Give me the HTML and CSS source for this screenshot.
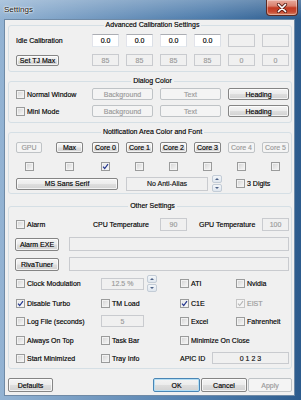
FILE: index.html
```html
<!DOCTYPE html>
<html>
<head>
<meta charset="utf-8">
<title>Settings</title>
<link rel="stylesheet" href="styles.css">
</head>
<body>
<div class="window">
  <div class="titlebar">
    <span class="title">Settings</span>
    <div class="close">
      <svg width="12" height="10" viewBox="0 0 12 10">
        <path d="M2.5 1.5 L9.5 8.5 M9.5 1.5 L2.5 8.5" stroke="#5a2018" stroke-width="3.2" stroke-linecap="round"/>
        <path d="M2.5 1.5 L9.5 8.5 M9.5 1.5 L2.5 8.5" stroke="#fff" stroke-width="1.7" stroke-linecap="round"/>
      </svg>
    </div>
  </div>
  <div class="client">
    <fieldset class="group g1">
      <legend>Advanced Calibration Settings</legend>
      <div class="row r13">
        <span class="lbl">Idle Calibration</span>
        <div class="cal">
          <div class="edit">0.0</div>
          <div class="edit">0.0</div>
          <div class="edit">0.0</div>
          <div class="edit">0.0</div>
          <div class="edit dis"></div>
          <div class="edit dis"></div>
        </div>
      </div>
      <div class="row r12 mt7">
        <button class="btn b-tj">Set TJ Max</button>
        <div class="cal">
          <div class="edit dis">85</div>
          <div class="edit dis">85</div>
          <div class="edit dis">85</div>
          <div class="edit dis">85</div>
          <div class="edit dis">0</div>
          <div class="edit dis">0</div>
        </div>
      </div>
    </fieldset>

    <fieldset class="group g2">
      <legend>Dialog Color</legend>
      <div class="row r12">
        <label class="chk"><span class="box"></span>Normal Window</label>
        <div class="cols3">
          <button class="btn dis">Background</button>
          <button class="btn dis">Text</button>
          <button class="btn">Heading</button>
        </div>
      </div>
      <div class="row r12 mt5">
        <label class="chk"><span class="box"></span>Mini Mode</label>
        <div class="cols3">
          <button class="btn dis">Background</button>
          <button class="btn dis">Text</button>
          <button class="btn">Heading</button>
        </div>
      </div>
    </fieldset>

    <fieldset class="group g3">
      <legend>Notification Area Color and Font</legend>
      <div class="row r11 cores">
        <button class="btn dis c-gpu">GPU</button>
        <button class="btn c-max">Max</button>
        <button class="btn c-0">Core 0</button>
        <button class="btn c-n">Core 1</button>
        <button class="btn c-n">Core 2</button>
        <button class="btn c-n">Core 3</button>
        <button class="btn dis c-n">Core 4</button>
        <button class="btn dis c-n">Core 5</button>
      </div>
      <div class="row r9 mt9 cores">
        <span class="cell c-gpu"><span class="box"></span></span>
        <span class="cell c-max"><span class="box"></span></span>
        <span class="cell c-0"><span class="box on"><svg width="7" height="7" viewBox="0 0 7 7"><path d="M1 3.6 L2.7 5.5 L6 1.2" fill="none" stroke="#26388f" stroke-width="1.2"/></svg></span></span>
        <span class="cell c-n"><span class="box"></span></span>
        <span class="cell c-n"><span class="box"></span></span>
        <span class="cell c-n"><span class="box"></span></span>
        <span class="cell c-n"><span class="box"></span></span>
        <span class="cell c-n"><span class="box"></span></span>
      </div>
      <div class="row r17 mt4">
        <button class="btn b-font">MS Sans Serif</button>
        <div class="edit ro f-alias">No Anti-Alias</div>
        <div class="spin sp-font"><span class="up"></span><span class="dn"></span></div>
        <label class="chk ml14"><span class="box"></span>3 Digits</label>
      </div>
    </fieldset>

    <fieldset class="group g4">
      <legend>Other Settings</legend>
      <div class="row r13">
        <div class="c-alarm"><label class="chk"><span class="box"></span>Alarm</label></div>
        <span class="lbl t-cpu">CPU Temperature</span>
        <div class="edit dis w27">90</div>
        <span class="lbl t-gpu">GPU Temperature</span>
        <div class="edit dis w27">100</div>
      </div>
      <div class="row r14 mt6">
        <button class="btn b-exe">Alarm EXE</button>
        <div class="edit dis path"></div>
      </div>
      <div class="row r14 mt6">
        <button class="btn b-exe">RivaTuner</button>
        <div class="edit dis path"></div>
      </div>
      <div class="row r17 mt4">
        <div class="ca"><label class="chk"><span class="box"></span>Clock Modulation</label></div>
        <div class="cb"><div class="edit dis w43 h12">12.5 %</div><div class="spin sp-clk"><span class="up"></span><span class="dn"></span></div></div>
        <div class="cc"><label class="chk"><span class="box"></span>ATI</label></div>
        <label class="chk"><span class="box"></span>Nvidia</label>
      </div>
      <div class="row r12 mt5">
        <div class="ca"><label class="chk"><span class="box on"><svg width="7" height="7" viewBox="0 0 7 7"><path d="M1 3.6 L2.7 5.5 L6 1.2" fill="none" stroke="#26388f" stroke-width="1.2"/></svg></span>Disable Turbo</label></div>
        <div class="cb"><label class="chk"><span class="box"></span>TM Load</label></div>
        <div class="cc"><label class="chk"><span class="box on"><svg width="7" height="7" viewBox="0 0 7 7"><path d="M1 3.6 L2.7 5.5 L6 1.2" fill="none" stroke="#26388f" stroke-width="1.2"/></svg></span>C1E</label></div>
        <label class="chk dis"><span class="box on"><svg width="7" height="7" viewBox="0 0 7 7"><path d="M1 3.6 L2.7 5.5 L6 1.2" fill="none" stroke="#b5b5b5" stroke-width="1.1"/></svg></span>EIST</label>
      </div>
      <div class="row r12 mt6">
        <div class="ca"><label class="chk"><span class="box"></span>Log File (seconds)</label></div>
        <div class="cb"><div class="edit dis w43 h12">5</div></div>
        <div class="cc"><label class="chk"><span class="box"></span>Excel</label></div>
        <label class="chk"><span class="box"></span>Fahrenheit</label>
      </div>
      <div class="row r12 mt7">
        <div class="ca"><label class="chk"><span class="box"></span>Always On Top</label></div>
        <div class="cb"><label class="chk"><span class="box"></span>Task Bar</label></div>
        <label class="chk"><span class="box"></span>Minimize On Close</label>
      </div>
      <div class="row r12 mt6">
        <div class="ca"><label class="chk"><span class="box"></span>Start Minimized</label></div>
        <div class="cb"><label class="chk"><span class="box"></span>Tray Info</label></div>
        <span class="lbl t-apic">APIC ID</span>
        <div class="edit ro apic">0 1 2 3</div>
      </div>
    </fieldset>

    <div class="row r14 bottom">
      <button class="btn b-def">Defaults</button>
      <button class="btn default b-ok">OK</button>
      <button class="btn b-cancel">Cancel</button>
      <button class="btn dis b-apply">Apply</button>
    </div>
  </div>
</div>
</body>
</html>
```

FILE: styles.css
```css
* { box-sizing: border-box; }
html, body { margin: 0; padding: 0; }
body {
  width: 301px;
  height: 400px;
  overflow: hidden;
  font-family: "Liberation Sans", Arial, sans-serif;
  font-size: 7px;
  color: #000;
  -webkit-text-stroke: 0.15px currentColor;
  background:
    linear-gradient(180deg, rgba(255,255,255,0.25) 0px, rgba(255,255,255,0) 19px),
    linear-gradient(90deg, #93b3d3 0%, #6f96be 35%, #4b7aaa 70%, #2c5b8d 100%);
}
.window { display: flex; flex-direction: column; height: 400px; }

.titlebar {
  height: 19px;
  display: flex;
  justify-content: space-between;
  align-items: flex-start;
  padding: 0 3px 0 4px;
}
.title {
  font-size: 8px;
  line-height: 8px;
  margin-top: 6px;
  color: #111;
  -webkit-text-stroke: 0;
  text-shadow: 0 0 3px #fff, 0 0 2px #fff, 0 0 1px #fff;
}
.close {
  width: 32px;
  height: 16px;
  border: 1px solid #5c2a22;
  border-top: none;
  border-radius: 0 0 4px 4px;
  background: linear-gradient(180deg, #e8ab9d 0%, #d9806d 40%, #c23a21 52%, #c74b33 80%, #d98a6a 100%);
  box-shadow: inset 0 0 0 1px rgba(255,255,255,0.35);
  display: flex;
  align-items: center;
  justify-content: center;
}

.client {
  margin-left: 4px;
  width: 291px;
  height: 377px;
  background: #f0f0f0;
  border: 1px solid #6f8aa6;
  padding: 0 2px 0 3px;
}

.group {
  margin: 0;
  width: 284px;
  min-width: 0;
  padding: 0 2px 0 7px;
  border: 1px solid #d5dfe5;
  border-radius: 3px;
}
.group legend {
  margin: 0 auto;
  padding: 0 2px;
  height: 10px;
  line-height: 10px;
}
.g1 { padding-top: 4px; padding-bottom: 5px; }
.g2 { margin-top: 4px; padding-top: 2px; padding-bottom: 5px; }
.g3 { margin-top: 4px; padding-top: 5px; padding-bottom: 1px; }
.g4 { margin-top: 7px; padding-top: 7px; padding-bottom: 4px; }

.row { display: flex; align-items: center; }
.r9 { height: 9px; }
.r11 { height: 11px; }
.r12 { height: 12px; }
.r13 { height: 13px; }
.r14 { height: 14px; }
.r17 { height: 17px; }
.mt4 { margin-top: 4px; }
.mt5 { margin-top: 5px; }
.mt6 { margin-top: 6px; }
.mt7 { margin-top: 7px; }
.mt9 { margin-top: 9px; }
.ml14 { margin-left: 14px; }

.lbl { white-space: nowrap; }

/* edit boxes */
.edit {
  height: 100%;
  background: #fff;
  border: 1px solid #abadb3;
  border-color: #abadb3 #dbdfe6 #e3e9ef #e2e3ea;
  display: flex;
  align-items: center;
  justify-content: center;
  white-space: nowrap;
}
.edit.dis {
  background: #f0f0f0;
  border: 1px solid #c9cbcf;
  color: #9a9a9a;
}
.edit.ro {
  background: #f0f0f0;
  border: 1px solid #c9cbcf;
  color: #111;
}
.w27 { width: 27px; }
.w43 { width: 43px; }
.h12 { height: 12px; }

.cal { margin-left: auto; display: flex; gap: 7px; height: 100%; }
.cal .edit { width: 27px; }

/* buttons */
.btn {
  font: inherit;
  color: #000;
  height: 100%;
  padding: 0;
  margin: 0;
  border: 1px solid #858585;
  border-radius: 2px;
  background: linear-gradient(180deg, #f4f4f4 0%, #ececec 48%, #dedede 52%, #d2d2d2 100%);
  box-shadow: inset 0 0 0 1px rgba(255,255,255,0.7);
  white-space: nowrap;
  text-align: center;
}
.btn.dis {
  border-color: #bfc3c6;
  background: #f4f4f4;
  color: #9a9a9a;
  box-shadow: none;
}
.btn.default {
  border-color: #4a86b5;
  box-shadow: inset 0 0 0 1px #b4def4;
}
.b-tj { width: 43px; height: 11px; }
.cols3 { margin-left: auto; display: flex; gap: 7px; height: 100%; }
.cols3 .btn { width: 61px; }

/* checkbox */
.chk { display: flex; align-items: center; white-space: nowrap; }
.box {
  width: 9px;
  height: 9px;
  flex: none;
  border: 1px solid #9a9b9b;
  background: linear-gradient(135deg, #d2d2d2 0%, #e8e8e8 55%, #f8f8f8 100%);
  box-shadow: inset 0 0 0 1px #f2f2f2;
  margin-right: 2px;
  display: flex;
  align-items: center;
  justify-content: center;
}
.box.on { background: linear-gradient(135deg, #e2e2e2 0%, #f2f2f2 60%, #ffffff 100%); }
.chk.dis { color: #9a9a9a; }
.chk.dis .box { border-color: #c5c5c5; background: #f4f4f4; box-shadow: none; }

/* notification row */
.cores .c-gpu { width: 26px; }
.cores .c-max { width: 27px; margin-left: 14px; }
.cores .c-0 { width: 27px; margin-left: 9px; }
.cores .c-n { width: 27px; margin-left: 7px; }
.cell { display: flex; justify-content: center; height: 100%; }
.cell .box { margin-right: 0; }

.b-font { width: 102px; height: 12px; }
.f-alias { width: 82px; height: 14px; margin-left: 8px; }

.spin {
  width: 10px;
  height: 17px;
  display: flex;
  flex-direction: column;
  gap: 1px;
}
.spin span {
  flex: 1;
  border: 1px solid #c3ccd6;
  border-radius: 2px;
  background: linear-gradient(180deg, #f3f6f9, #dfe6ee);
  position: relative;
}
.spin .up::after, .spin .dn::after {
  content: "";
  position: absolute;
  left: 2px;
  border-left: 2px solid transparent;
  border-right: 2px solid transparent;
}
.spin .up::after { top: 2px; border-bottom: 2px solid #4d6185; }
.spin .dn::after { top: 2px; border-top: 2px solid #4d6185; }
.sp-font { margin-left: 4px; }
.sp-clk { margin-left: 3px; }

/* other settings */
.c-alarm { width: 77px; }
.t-cpu { width: 67px; }
.t-gpu { width: 63px; margin-left: 12px; }
.b-exe { width: 44px; height: 13px; margin-left: -1px; }
.path { flex: 1; margin-left: 10px; }
.ca { width: 85px; }
.cb { width: 79px; display: flex; align-items: center; }
.cc { width: 56px; }
.t-apic { width: 32px; }
.apic { flex: 1; height: 12px; }

.bottom { margin-top: 9px; }
.b-def { width: 45px; }
.b-ok { width: 47px; margin-left: auto; }
.b-cancel { width: 46px; margin-left: 1px; }
.b-apply { width: 44px; margin-left: 1px; }
```
